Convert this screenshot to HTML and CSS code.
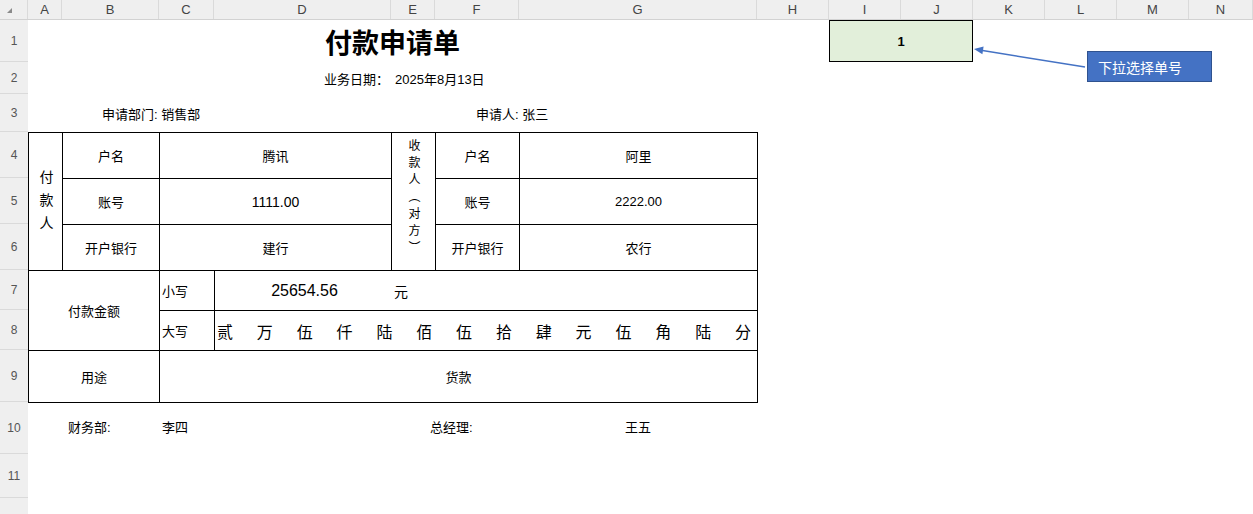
FILE: index.html
```html
<!DOCTYPE html>
<html lang="zh-CN">
  <head>
    <meta charset="UTF-8" />
    <meta name="viewport" content="width=device-width, initial-scale=1.0" />
    <title>付款申请单</title>
    <link rel="stylesheet" href="styles.css">
  </head>
  <body>
    <div class="sheet">
      <div class="col-heads">
        <div class="corner"><span class="corner-mark"></span></div>
        <div class="col-head">A</div>
        <div class="col-head">B</div>
        <div class="col-head">C</div>
        <div class="col-head">D</div>
        <div class="col-head">E</div>
        <div class="col-head">F</div>
        <div class="col-head">G</div>
        <div class="col-head">H</div>
        <div class="col-head">I</div>
        <div class="col-head">J</div>
        <div class="col-head">K</div>
        <div class="col-head">L</div>
        <div class="col-head">M</div>
        <div class="col-head">N</div>
      </div>

      <div class="main">
        <div class="row-heads">
          <div class="row-head">1</div>
          <div class="row-head">2</div>
          <div class="row-head">3</div>
          <div class="row-head">4</div>
          <div class="row-head">5</div>
          <div class="row-head">6</div>
          <div class="row-head">7</div>
          <div class="row-head">8</div>
          <div class="row-head">9</div>
          <div class="row-head">10</div>
          <div class="row-head">11</div>
          <div class="row-head"></div>
        </div>

        <div class="cells">
          <div class="cell title">付款申请单</div>
          <div class="cell date-label">业务日期：</div>
          <div class="cell date-value">2025年8月13日</div>
          <div class="cell dept">申请部门: 销售部</div>
          <div class="cell applicant">申请人: 张三</div>

          <table class="form">
            <colgroup>
              <col class="w-a"><col class="w-b"><col class="w-c"><col class="w-d">
              <col class="w-e"><col class="w-f"><col class="w-g">
            </colgroup>
            <tr class="r-46">
              <td rowspan="3"><span class="vert payer">付款人</span></td>
              <td>户名</td>
              <td colspan="2">腾讯</td>
              <td rowspan="3"><span class="vert payee">收款人（对方）</span></td>
              <td>户名</td>
              <td>阿里</td>
            </tr>
            <tr class="r-46">
              <td>账号</td>
              <td colspan="2" class="num">1111.00</td>
              <td>账号</td>
              <td class="num small">2222.00</td>
            </tr>
            <tr class="r-46">
              <td>开户银行</td>
              <td colspan="2">建行</td>
              <td>开户银行</td>
              <td>农行</td>
            </tr>
            <tr class="r-40">
              <td colspan="2" rowspan="2">付款金额</td>
              <td class="left">小写</td>
              <td colspan="4" class="left">
                <div class="amount">
                  <span class="amount-num">25654.56</span>
                  <span class="amount-unit">元</span>
                </div>
              </td>
            </tr>
            <tr class="r-40">
              <td class="left">大写</td>
              <td colspan="4">
                <div class="upper">
                  <span>贰</span><span>万</span><span>伍</span><span>仟</span><span>陆</span><span>佰</span><span>伍</span>
                  <span>拾</span><span>肆</span><span>元</span><span>伍</span><span>角</span><span>陆</span><span>分</span>
                </div>
              </td>
            </tr>
            <tr class="r-52">
              <td colspan="2">用途</td>
              <td colspan="5">货款</td>
            </tr>
          </table>

          <div class="cell finance">财务部:</div>
          <div class="cell finance-name">李四</div>
          <div class="cell manager">总经理:</div>
          <div class="cell manager-name">王五</div>

          <div class="cell pick">1</div>
        </div>
      </div>

      <svg class="arrow" width="1253" height="514" viewBox="0 0 1253 514">
        <line x1="1085" y1="67" x2="981" y2="50.3" stroke="#4472c4" stroke-width="1.5" />
        <polygon points="974,49 983.6,46.6 982.4,54.2" fill="#4472c4" />
      </svg>
      <div class="callout">下拉选择单号</div>
    </div>
  </body>
</html>
```

FILE: styles.css
```css
* {
  margin: 0;
  padding: 0;
  box-sizing: border-box;
}
html, body {
  height: 100%;
  overflow: hidden;
  background: #fff;
  font-family: "Liberation Sans", "Noto Sans CJK SC", sans-serif;
  color: #000;
}
.sheet {
  position: relative;
  width: 1253px;
  height: 514px;
  overflow: hidden;
  --cols: 34px 97px 55px 177px 44px 84px 238px 72px 72px 72px 72px 72px 72px 64px;
  --rows: 42px 32px 38px 46px 46px 46px 40px 40px 52px 52px 44px 44px;
}

/* headers */
.col-heads {
  display: grid;
  grid-template-columns: 28px var(--cols);
  height: 20px;
  background: #efefef;
  border-bottom: 1px solid #d2d2d2;
}
.corner {
  position: relative;
  border-right: 1px solid #dadada;
}
.corner-mark {
  position: absolute;
  left: 7px;
  top: 8px;
  border-left: 5px solid transparent;
  border-bottom: 5px solid #8a8a8a;
}
.col-head {
  display: flex;
  align-items: center;
  justify-content: center;
  border-right: 1px solid #dadada;
  font-size: 13px;
  color: #444;
}
.main {
  display: grid;
  grid-template-columns: 28px 1fr;
}
.row-heads {
  display: grid;
  grid-template-rows: var(--rows);
  background: #efefef;
}
.row-head {
  display: flex;
  align-items: center;
  justify-content: center;
  border-bottom: 1px solid #dadada;
  font-size: 12px;
  color: #555;
}

/* sheet body */
.cells {
  display: grid;
  grid-template-columns: var(--cols);
  grid-template-rows: var(--rows);
  font-size: 13px;
}
.cell {
  display: flex;
  align-items: center;
  white-space: nowrap;
}
.title {
  grid-column: 1 / 8;
  grid-row: 1;
  justify-content: center;
  font-family: "Noto Sans CJK SC", sans-serif;
  font-size: 27px;
  font-weight: 700;
}
.date-label {
  grid-column: 4;
  grid-row: 2;
  justify-content: flex-end;
  padding-right: 2px;
}
.date-value {
  grid-column: 5 / 8;
  grid-row: 2;
  padding-left: 4px;
}
.dept {
  grid-column: 2 / 5;
  grid-row: 3;
  padding-left: 40px;
}
.applicant {
  grid-column: 6 / 8;
  grid-row: 3;
  padding-left: 41px;
}
.finance {
  grid-column: 1 / 3;
  grid-row: 10;
  padding-left: 40px;
  padding-bottom: 3px;
}
.finance-name {
  grid-column: 3;
  grid-row: 10;
  padding-left: 3px;
  padding-bottom: 3px;
}
.manager {
  grid-column: 5 / 7;
  grid-row: 10;
  padding-left: 39px;
  padding-bottom: 3px;
}
.manager-name {
  grid-column: 7;
  grid-row: 10;
  justify-content: center;
  padding-bottom: 3px;
}
.pick {
  grid-column: 9 / 11;
  grid-row: 1;
  justify-content: center;
  background: #e2efda;
  border: 1px solid #000;
  font-weight: 700;
}

/* form table */
.form {
  grid-column: 1 / 8;
  grid-row: 4 / 10;
  width: 729px;
  height: 270px;
  table-layout: fixed;
  border-collapse: collapse;
}
.w-a { width: 34px; }
.w-b { width: 97px; }
.w-c { width: 55px; }
.w-d { width: 177px; }
.w-e { width: 44px; }
.w-f { width: 84px; }
.w-g { width: 238px; }
.r-46 { height: 46px; }
.r-40 { height: 40px; }
.r-52 { height: 52px; }
.form td {
  border: 1px solid #000;
  text-align: center;
  vertical-align: middle;
  font-size: 13px;
  padding: 0;
  white-space: nowrap;
}
.form td.num {
  font-size: 14px;
}
.form td.num.small {
  font-size: 13px;
}
.form td.left {
  text-align: left;
  padding-left: 2px;
}
.vert {
  display: inline-block;
  writing-mode: vertical-rl;
}
.vert.payer {
  font-size: 14px;
  letter-spacing: 9px;
  padding-top: 9px;
}
.vert.payee {
  font-size: 12px;
  letter-spacing: 5px;
  margin-top: -4px;
}
.amount {
  display: flex;
  align-items: center;
}
.amount-num {
  width: 175px;
  text-align: center;
  font-size: 16px;
}
.amount-unit {
  padding-left: 2px;
  font-size: 14px;
}
.upper {
  display: flex;
  justify-content: space-between;
  padding: 0 6px 0 2px;
  font-size: 16px;
}

/* floating note */
.arrow {
  position: absolute;
  left: 0;
  top: 0;
  pointer-events: none;
}
.callout {
  position: absolute;
  left: 1087px;
  top: 51px;
  width: 125px;
  height: 31px;
  padding-left: 10px;
  display: flex;
  align-items: center;
  background: #4472c4;
  border: 1px solid #2f528f;
  color: #fff;
  font-size: 14px;
}
```
